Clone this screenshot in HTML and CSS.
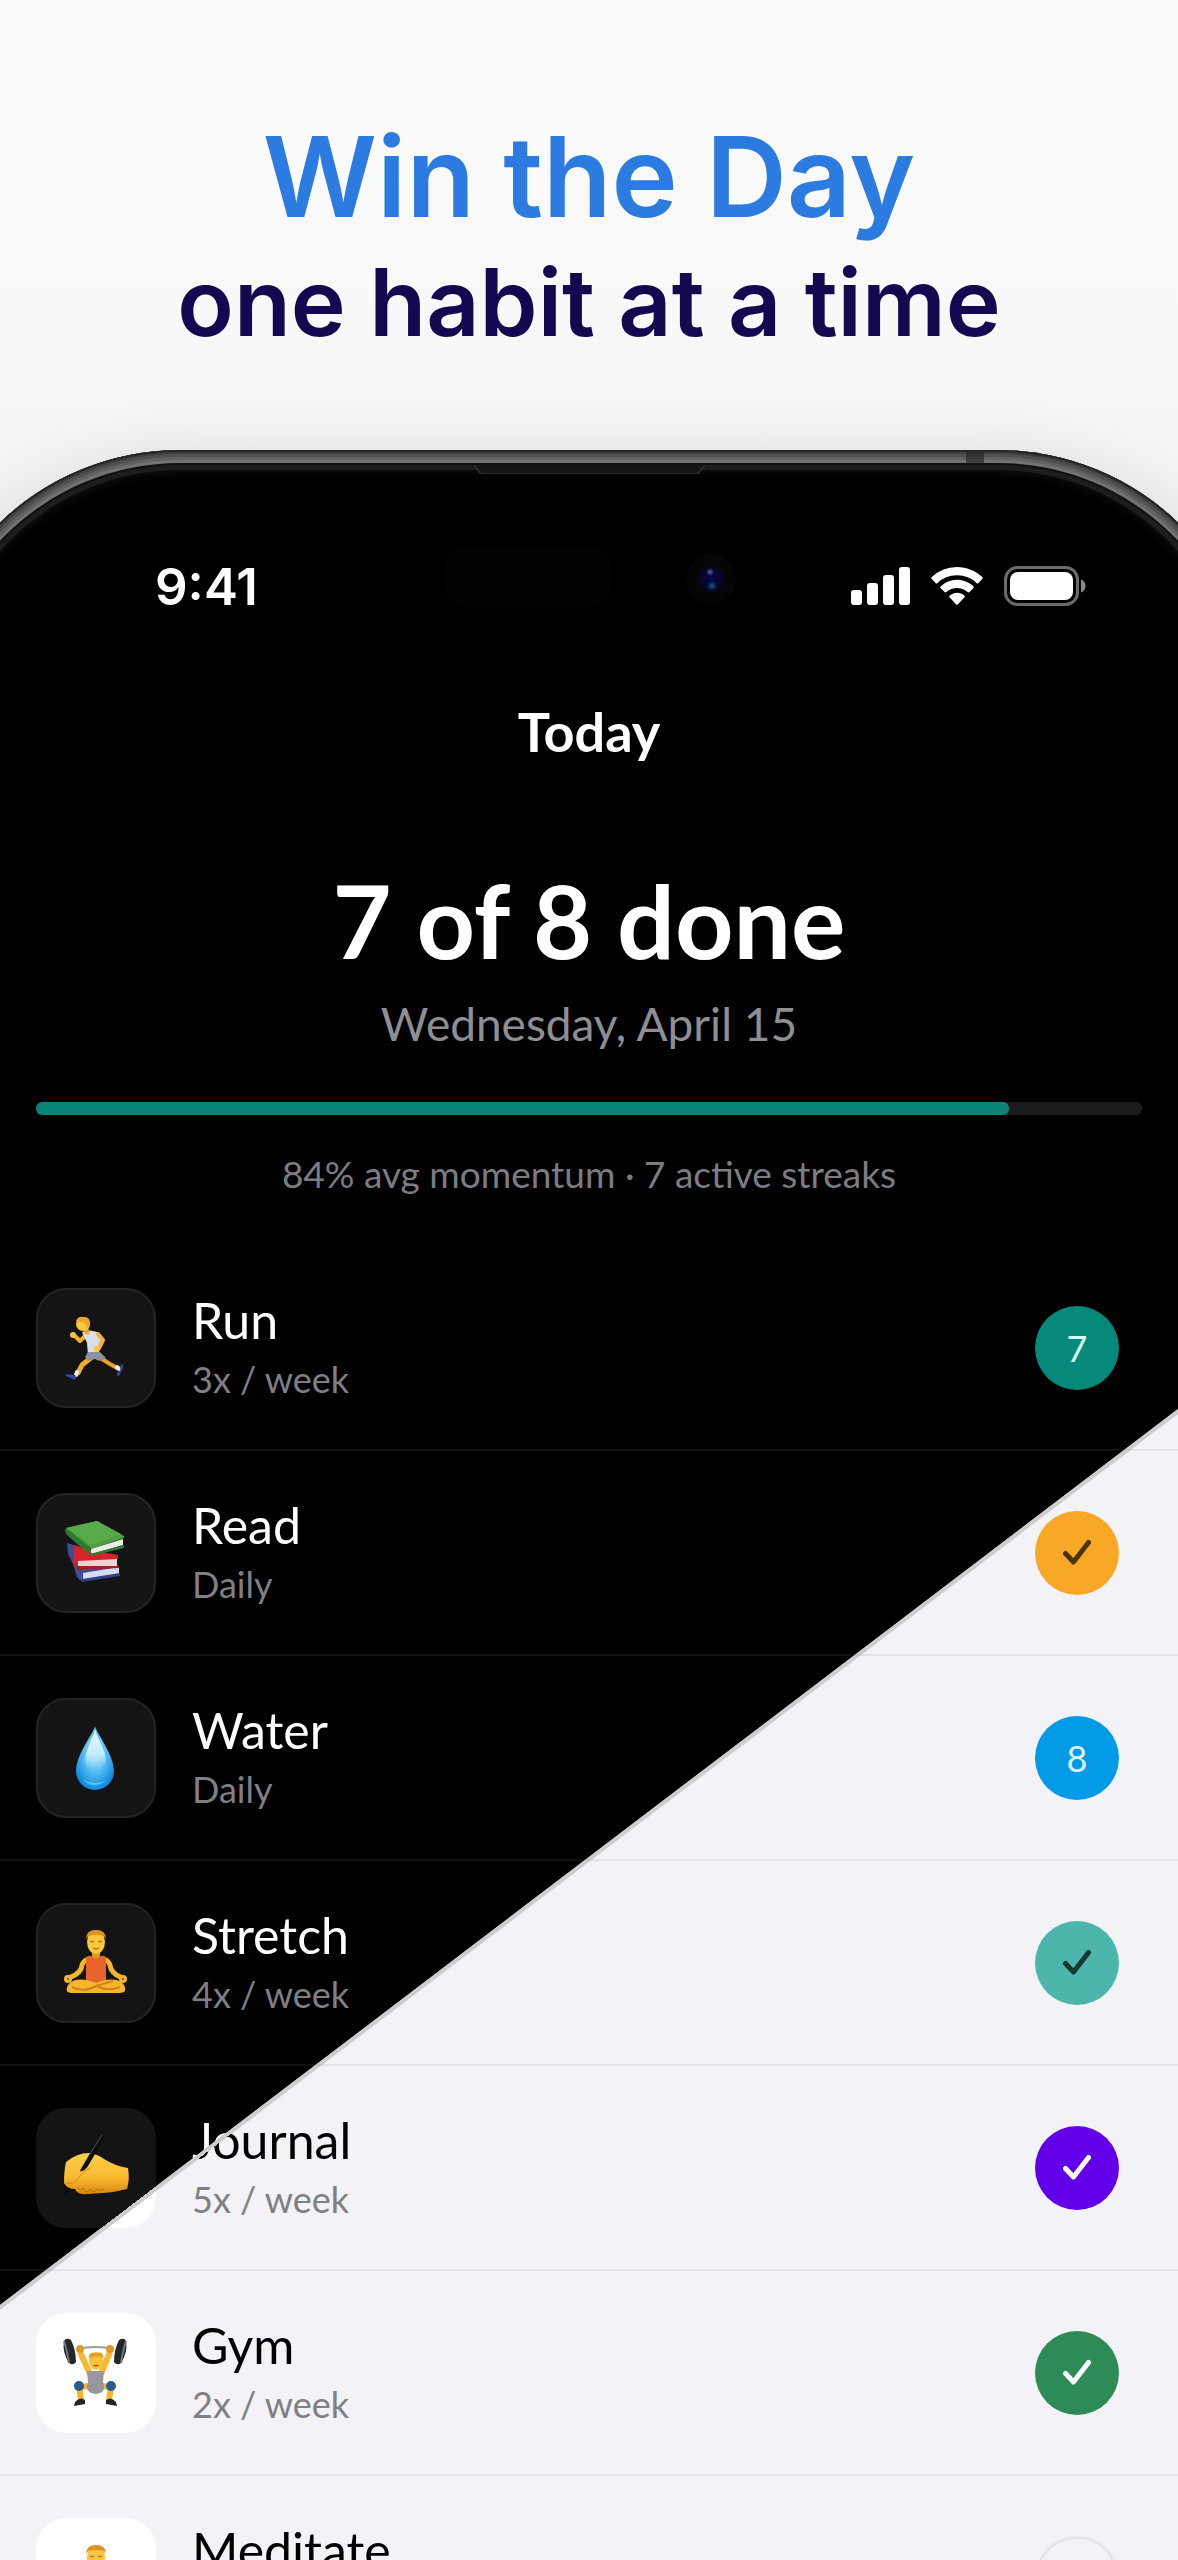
FILE: index.html
```
<!DOCTYPE html>
<html lang="en">
<head>
  <meta charset="UTF-8" />
  <meta name="viewport" content="width=device-width, initial-scale=1" />
  <title>Win the Day</title>
  <link rel="stylesheet" href="styles.css">
</head>
<body>

  <header class="hero">
    <h1>Win the Day</h1>
    <p>one habit at a time</p>
  </header>

  <main class="phone">
    <span class="speaker"></span>
    <span class="antenna"></span>
    <span class="sensor"></span>
    <span class="camera"></span>

    <div class="status-bar">
      <span class="time">9:41</span>
      <div class="status-icons">
        <svg width="59" height="38" viewBox="0 0 59 38" fill="#fff">
          <rect x="0" y="23" width="11" height="15" rx="3"/>
          <rect x="16" y="16" width="11" height="22" rx="3"/>
          <rect x="32" y="8" width="11" height="30" rx="3"/>
          <rect x="48" y="0" width="11" height="38" rx="3"/>
        </svg>
        <svg width="52" height="38" viewBox="0 0 52 38" fill="#fff">
          <path d="M26 0c9.600 0 18.500 3.700 25.200 10.100q1 1 0 2l-3.700 3.800q-1 1-2 0A28 28 0 0 0 26 8.300 28 28 0 0 0 6.500 15.900q-1 1-2 0L.8 12.100q-1-1 0-2A36.500 36.500 0 0 1 26 0z"/>
          <path d="M26 12.800c6.200 0 12 2.400 16.300 6.500q1 1 0 2l-3.800 3.800q-1 .9-2 0A15.400 15.400 0 0 0 26 21c-4 0-7.700 1.500-10.500 4.100q-1 .9-2 0l-3.800-3.800q-1-1 0-2A23.600 23.600 0 0 1 26 12.800z"/>
          <path d="M26 25.800c2.800 0 5.400 1 7.300 2.700q1 1 0 2l-6.300 6.700q-1 1-2 0l-6.300-6.700q-1-1 0-2a11 11 0 0 1 7.300-2.700z"/>
        </svg>
        <svg width="82" height="40" viewBox="0 0 82 40">
          <rect x="1.500" y="1.500" width="72" height="37" rx="12" fill="none" stroke="#6b6b6b" stroke-width="3"/>
          <rect x="6" y="6" width="63" height="28" rx="8" fill="#fff"/>
          <path d="M77 13.500c3 1.200 4.500 3.600 4.500 6.500S80 25.300 77 26.500z" fill="#8a8a8a"/>
        </svg>
      </div>
    </div>

    <h2 class="screen-title">Today</h2>

    <section class="summary">
      <h3>7 of 8 done</h3>
      <p class="date">Wednesday, April 15</p>
      <progress class="bar" value="88" max="100" aria-label="Habits done"></progress>
      <p class="stats">84% avg momentum · 7 active streaks</p>
    </section>

    <section class="habits">
      <!-- dark theme above the diagonal, light theme below -->
      <svg class="split" viewBox="0 0 1178 1435" preserveAspectRatio="none">
        <rect width="1178" height="1435" fill="#f2f2f7"/>
        <path d="M0 0H1178V163L0 1059z" fill="#000"/>
        <path d="M0 1059L1178 163V168L0 1064z" fill="#cfcccd"/>
      </svg>

      <ul class="habit-list">
        <li class="habit">
          <span class="tile">
            <svg class="emoji" viewBox="0 0 66 66" fill="none" stroke-linecap="round" stroke-linejoin="round">
              <path d="M24 19L17 26L11 20" stroke="#f0ae2c" stroke-width="4"/>
              <circle cx="10" cy="20" r="3" fill="#fbc53d"/>
              <path d="M29 42L19 50L15 58" stroke="#f2ae2f" stroke-width="5"/>
              <path d="M39 44L47 49L54 53" stroke="#e9a12b" stroke-width="4"/>
              <path d="M14 57L13 60M54 52L56 54" stroke="#eee" stroke-width="4"/>
              <path d="M3 59L12 60Q14 62 12 65L3 61z" fill="#39459c"/>
              <path d="M58 49Q61 49 60 53L56 61Q53 61 54 58L57 55z" fill="#39459c"/>
              <path d="M19 17Q26 14 34 17L40 23L36 29L36 38L25 40L24 28z" fill="#dcdde5"/>
              <path d="M25 37L37 37L43 43Q38 48 32 44L25 46L22 42z" fill="#8f9099"/>
              <path d="M35 19L40 25L36 33" stroke="#f3b334" stroke-width="4"/>
              <circle cx="34" cy="34" r="3" fill="#fbc53d"/>
              <path d="M22 12L24 17" stroke="#e9a22b" stroke-width="5"/>
              <ellipse cx="20" cy="9" rx="7" ry="7" fill="#fbc53d"/>
              <path d="M13 6Q15 1 21 2Q27 2 27 8Q27 12 24 13Q23 8 19 7Q16 7 13 6z" fill="#f0a62e"/>
            </svg>
          </span>
          <div class="info">
            <span class="name">Run</span>
            <span class="freq">3x / week</span>
          </div>
          <button class="badge teal" type="button">7</button>
        </li>

        <li class="habit">
          <span class="tile">
            <svg class="emoji" viewBox="0 0 66 66">
              <path d="M4 23L14 26L56 46V48L21 56L19 61Q14 59 13 54L10 44L5 34z" fill="#3c4c93"/>
              <path d="M20 53L56 47V54L20 60z" fill="#d4dbef"/>
              <path d="M19 59L57 53V56L19 62z" fill="#33427f"/>
              <path d="M11 25L28 30L55 35V39L16 42Q13 42 13 48Q10 46 11 39z" fill="#d4232a"/>
              <path d="M15 41L54 39V46L15 48z" fill="#efd3d4"/>
              <path d="M13 46L56 46V48L14 50z" fill="#a91c24"/>
              <path d="M3 8L34 1L61 16V18L28 29z" fill="#4f9f42"/>
              <path d="M3 8L34 1L58 14L28 25z" fill="#57a949"/>
              <path d="M3 8L28 28Q25 31 28 36L4 15Q1 11 3 8z" fill="#2e7a30"/>
              <path d="M28 29L60 19V25L29 34Q27 32 28 29z" fill="#e8eee4"/>
              <path d="M27 34L61 25V28L28 36z" fill="#2d7a2f"/>
            </svg>
          </span>
          <div class="info">
            <span class="name">Read</span>
            <span class="freq">Daily</span>
          </div>
          <button class="badge orange" type="button" aria-label="Read done">
            <svg class="check" viewBox="0 0 28 28"><path d="M2.500 14.500L10.500 23L25.500 3.500"/></svg>
          </button>
        </li>

        <li class="habit">
          <span class="tile">
            <svg class="emoji" viewBox="0 0 66 66">
              <defs>
                <radialGradient id="drop" cx="50%" cy="42%" r="60%">
                  <stop offset="0" stop-color="#b4e4fb"/>
                  <stop offset=".5" stop-color="#55bdf3"/>
                  <stop offset="1" stop-color="#0e86dc"/>
                </radialGradient>
                <linearGradient id="shine" x1="0" y1="0" x2="0" y2="1">
                  <stop offset="0" stop-color="#e6f8ff"/>
                  <stop offset=".6" stop-color="#c6ecfc"/>
                  <stop offset="1" stop-color="#9bdcfa" stop-opacity="0"/>
                </linearGradient>
              </defs>
              <path d="M32 1C34 9 51 30 51 46A19 19 0 0 1 13 46C13 30 30 9 32 1z" fill="url(#drop)"/>
              <path d="M32 4C35 15 43 26 43 36Q40 45 32 45Q23 44 22 36C22 27 29 15 32 4z" fill="url(#shine)"/>
              <path d="M20 55Q31 65 44 55Q32 61 20 55z" fill="#55c7f7"/>
            </svg>
          </span>
          <div class="info">
            <span class="name">Water</span>
            <span class="freq">Daily</span>
          </div>
          <button class="badge blue" type="button">8</button>
        </li>

        <li class="habit">
          <span class="tile">
            <svg class="emoji" viewBox="0 0 66 66">
              <g id="yoga">
                <path d="M29 17H37V29H29z" fill="#e09a1e"/>
                <path d="M25 29Q19 31 18 39Q14 46 4 48M41 29Q47 31 48 39Q52 46 61 48" fill="none" stroke="#f4b62f" stroke-width="5"/>
                <circle cx="5" cy="49" r="4" fill="#f4b62f"/>
                <circle cx="60" cy="49" r="4" fill="#f4b62f"/>
                <circle cx="5" cy="49" r="1" fill="#7d4c10"/>
                <circle cx="60" cy="49" r="1" fill="#7d4c10"/>
                <path d="M23 27Q27 25 28 26Q33 31 38 26Q40 25 43 27L43 54H23z" fill="#e9642b"/>
                <path d="M24 50Q10 48 5 55Q1 62 8 63H57Q65 62 61 55Q56 48 42 50L33 53z" fill="#f6b52f"/>
                <path d="M9 57Q20 63 33 56L50 51M33 56Q45 62 57 57" fill="none" stroke="#cf8419" stroke-width="2"/>
                <ellipse cx="33" cy="12" rx="9" ry="12" fill="#fbc63c"/>
                <path d="M23 9Q23 0 33 0Q43 0 43 9L41 6Q34 4 25 6z" fill="#dc9320"/>
                <path d="M27 11Q29 13 31 11M35 11Q37 13 39 11M30 18Q33 20 36 18" fill="none" stroke="#8c5712" stroke-width="1"/>
              </g>
            </svg>
          </span>
          <div class="info">
            <span class="name">Stretch</span>
            <span class="freq">4x / week</span>
          </div>
          <button class="badge mint" type="button" aria-label="Stretch done">
            <svg class="check" viewBox="0 0 28 28"><path d="M2.500 14.500L10.500 23L25.500 3.500"/></svg>
          </button>
        </li>

        <li class="habit">
          <span class="tile tile-split">
            <svg class="emoji" viewBox="0 0 66 66">
              <defs>
                <linearGradient id="hand" x1="0" y1="0" x2="0" y2="1">
                  <stop offset="0" stop-color="#ffd04a"/>
                  <stop offset=".6" stop-color="#f9b92f"/>
                  <stop offset="1" stop-color="#d98513"/>
                </linearGradient>
              </defs>
              <path d="M1 50L10 44L6 56L2 61z" fill="#050505"/>
              <path d="M3 27Q14 18 26 18Q34 19 41 24Q52 31 65 33Q67 44 64 54Q53 57 40 58L24 59Q14 60 12 54Q4 54 1 48Q1 36 3 27z" fill="url(#hand)"/>
              <path d="M3 48Q12 50 15 43Q18 38 27 33" fill="none" stroke="#d08d1c" stroke-width="1"/>
              <path d="M15 52Q17 58 20 53Q24 60 27 54Q31 60 34 54Q37 57 41 54" fill="none" stroke="#b96e0d" stroke-width="1"/>
              <path d="M38 0L42 2L25 31Q21 37 17 36L19 32z" fill="#0c0c0c"/>
              <path d="M25 22L39 0" stroke="#55555a" stroke-width="1"/>
            </svg>
          </span>
          <div class="info">
            <span class="name name-split">Journal</span>
            <span class="freq">5x / week</span>
          </div>
          <button class="badge purple" type="button" aria-label="Journal done">
            <svg class="check" viewBox="0 0 28 28"><path d="M2.500 14.500L10.500 23L25.500 3.500"/></svg>
          </button>
        </li>

        <li class="habit light">
          <span class="tile">
            <svg class="emoji" viewBox="0 0 66 66">
              <path d="M14 9Q33 5 50 9" fill="none" stroke="#9a9ca0" stroke-width="2"/>
              <path d="M1 1Q3-3 8 0Q13 10 13 22Q10 26 6 23Q-1 12 1 1z" fill="#23272c"/>
              <path d="M63 1Q61-3 56 0Q51 10 51 22Q54 26 58 23Q65 12 63 1z" fill="#23272c"/>
              <path d="M1 1Q4 10 6 23M63 1Q60 10 58 23" fill="none" stroke="#70777c" stroke-width="2"/>
              <path d="M17 12L27 34M47 12L38 34" stroke="#f6b931" stroke-width="6"/>
              <circle cx="17" cy="9" r="4" fill="#dd9b25"/>
              <circle cx="47" cy="9" r="4" fill="#dd9b25"/>
              <path d="M27 46L16 47L18 60M38 46L48 47L46 60" fill="none" stroke="#f4b631" stroke-width="6"/>
              <path d="M24 31H41L40 42Q44 53 33 54Q21 53 25 42z" fill="#97979d"/>
              <ellipse cx="33" cy="21" rx="7" ry="9" fill="#fac23a"/>
              <path d="M26 18Q25 12 33 13Q41 11 40 18Q34 15 26 18z" fill="#e5a02a"/>
              <path d="M30 25Q33 28 36 25z" fill="#87510e"/>
              <circle cx="16" cy="46" r="5" fill="#285c91"/>
              <circle cx="48" cy="46" r="5" fill="#285c91"/>
              <path d="M12 62Q17 56 22 60L22 64L11 66zM53 62Q48 56 43 60L43 64L54 66z" fill="#242428"/>
            </svg>
          </span>
          <div class="info">
            <span class="name">Gym</span>
            <span class="freq">2x / week</span>
          </div>
          <button class="badge green" type="button" aria-label="Gym done">
            <svg class="check" viewBox="0 0 28 28"><path d="M2.500 14.500L10.500 23L25.500 3.500"/></svg>
          </button>
        </li>

        <li class="habit light">
          <span class="tile">
            <svg class="emoji" viewBox="0 0 66 66"><use href="#yoga"/></svg>
          </span>
          <div class="info">
            <span class="name">Meditate</span>
            <span class="freq">&nbsp;</span>
          </div>
          <button class="badge empty" type="button" aria-label="Mark Meditate done"></button>
        </li>
      </ul>
    </section>
  </main>

</body>
</html>
```
FILE: styles.css
```
* {
  box-sizing: border-box;
}
html {
  overflow: hidden;
}
body {
  margin: 0;
  height: 100vh;
  overflow: hidden;
  background: linear-gradient(#fafafa, #f8f8f8 340px, #efefef 560px);
  font-family: Lato, "Open Sans", sans-serif;
}
h1, h2, h3, p, ul {
  margin: 0;
  padding: 0;
}
.hero {
  height: 450px;
  padding-top: 110px;
  font-family: Inter, sans-serif;
  font-weight: 600;
  text-align: center;
}
.hero h1 {
  color: #2b7be0;
  font-size: 112px;
  font-weight: 600;
  line-height: 132px;
}
.hero p {
  color: #140850;
  font-size: 93px;
  line-height: 120px;
}

/* the phone is wider than the window, so only its top shows */
.phone {
  position: relative;
  margin: 0 -80px;
  padding: 0 80px;
  overflow: hidden;
  border-radius: 260px 260px 0 0;
  background: #000;
  box-shadow: 0 0 60px rgba(0, 0, 0, 0.08);
}
.phone::before {
  content: "";
  position: absolute;
  inset: 0;
  border-radius: 260px 260px 0 0;
  pointer-events: none;
  box-shadow:
    inset 0 0 0 2px #252525,
    inset 0 0 0 4px #404040,
    inset 0 0 0 7px #505050,
    inset 0 0 0 10px #616161,
    inset 0 0 0 13px #727272,
    inset 0 0 0 15px #101010,
    inset 0 0 0 20px #1d1d1d,
    inset 0 0 12px 20px #161616;
}
.speaker {
  position: absolute;
  top: 15px;
  left: calc(50% - 116px);
  width: 233px;
  height: 9px;
  background: #2c2c2c;
  clip-path: polygon(0 0, 100% 0, 97% 100%, 3% 100%);
}
.speaker::after {
  content: "";
  position: absolute;
  inset: 0 2px 1px;
  background: #151515;
  clip-path: polygon(0 0, 100% 0, 97% 100%, 3% 100%);
}
.antenna {
  position: absolute;
  top: 2px;
  right: 274px;
  width: 18px;
  height: 12px;
  background: rgba(30, 30, 30, 0.6);
}
.sensor {
  position: absolute;
  top: 97px;
  left: calc(50% - 144px);
  width: 166px;
  height: 60px;
  border-radius: 20px;
  background: #030303;
}
.camera {
  position: absolute;
  top: 104px;
  left: calc(50% + 97px);
  width: 50px;
  height: 50px;
  border-radius: 50%;
  background:
    radial-gradient(circle at 24px 18px, #5a62b0 0, transparent 4px),
    radial-gradient(circle at 26px 32px, #1f4f8c 0, transparent 5px),
    radial-gradient(circle, #07084a 0, #050524 10px, #060608 15px, #050505 24px);
}
.status-bar {
  display: flex;
  justify-content: space-between;
  align-items: center;
  height: 100px;
  margin-top: 86px;
  padding: 0 92px 0 155px;
}
.time {
  color: #fff;
  font-family: Inter, sans-serif;
  font-size: 51px;
  font-weight: 600;
}
.status-icons {
  display: flex;
  align-items: center;
  gap: 21px;
}
.screen-title {
  margin-top: 64px;
  color: #fff;
  font-size: 54px;
  font-weight: 700;
  line-height: 64px;
  text-align: center;
}
.summary {
  padding: 96px 36px 0;
  text-align: center;
}
.summary h3 {
  color: #fff;
  font-size: 102px;
  font-weight: 700;
  line-height: 120px;
}
.date {
  margin-top: 16px;
  color: #8e8e93;
  font-size: 46px;
  line-height: 56px;
}
.bar {
  display: block;
  width: 100%;
  height: 13px;
  margin-top: 50px;
  border: none;
  border-radius: 6px;
  background: #1c1c1e;
  overflow: hidden;
  appearance: none;
}
.bar::-webkit-progress-bar {
  border-radius: 6px;
  background: #1c1c1e;
}
.bar::-webkit-progress-value {
  border-radius: 6px;
  background: #0a8678;
}
.stats {
  margin-top: 34px;
  color: #7c7c81;
  font-size: 37px;
  line-height: 50px;
}
.habits {
  position: relative;
  margin-top: 47px;
}
.split {
  position: absolute;
  width: 100%;
  height: 100%;
}
.habit-list {
  position: relative;
  list-style: none;
}
.habit {
  display: flex;
  align-items: center;
  height: 205px;
  padding: 0 59px 0 36px;
  border-bottom: 2px solid rgba(128, 128, 136, 0.13);
  color: #fff;
}
.light {
  color: #000;
}
.tile {
  display: flex;
  flex: none;
  justify-content: center;
  align-items: center;
  width: 120px;
  height: 120px;
  border: 2px solid #242424;
  border-radius: 30px;
  background: #141414;
}
.light .tile {
  border-color: #fff;
  background: #fff;
}
.tile-split {
  border-color: transparent;
  background: linear-gradient(142.7deg, #141414 135px, #cfcccd 135px, #cfcccd 139px, #fff 139px) border-box;
}
.emoji {
  width: 66px;
  height: 66px;
  overflow: visible;
}
.info {
  display: flex;
  flex: 1;
  flex-direction: column;
  align-items: flex-start;
  gap: 6px;
  padding-left: 36px;
}
.name {
  font-size: 50px;
  line-height: 56px;
}
.name-split {
  background: linear-gradient(142.7deg, #fff 37px, #cfcccd 37px, #cfcccd 41px, #000 41px);
  background-clip: text;
  -webkit-background-clip: text;
  color: transparent;
}
.freq {
  color: #7f7f84;
  font-size: 36px;
  line-height: 50px;
}
.badge {
  display: flex;
  flex: none;
  justify-content: center;
  align-items: center;
  width: 84px;
  height: 84px;
  padding: 0;
  border: none;
  border-radius: 50%;
  color: #fff;
  font-family: inherit;
  font-size: 36px;
  cursor: pointer;
}
.check {
  width: 28px;
  height: 28px;
  fill: none;
  stroke: currentColor;
  stroke-width: 5;
  stroke-linecap: round;
  stroke-linejoin: round;
}
.teal {
  background: #04897b;
  color: #d9fffa;
}
.orange {
  background: #f9a825;
  color: #4d320b;
}
.blue {
  background: #039be5;
  color: #dcf4ff;
}
.mint {
  background: #4db6ac;
  color: #173734;
}
.purple {
  background: #6200ea;
}
.green {
  background: #2e8b57;
}
.empty {
  border: 3px solid #e5e5ea;
  background: transparent;
}
```
